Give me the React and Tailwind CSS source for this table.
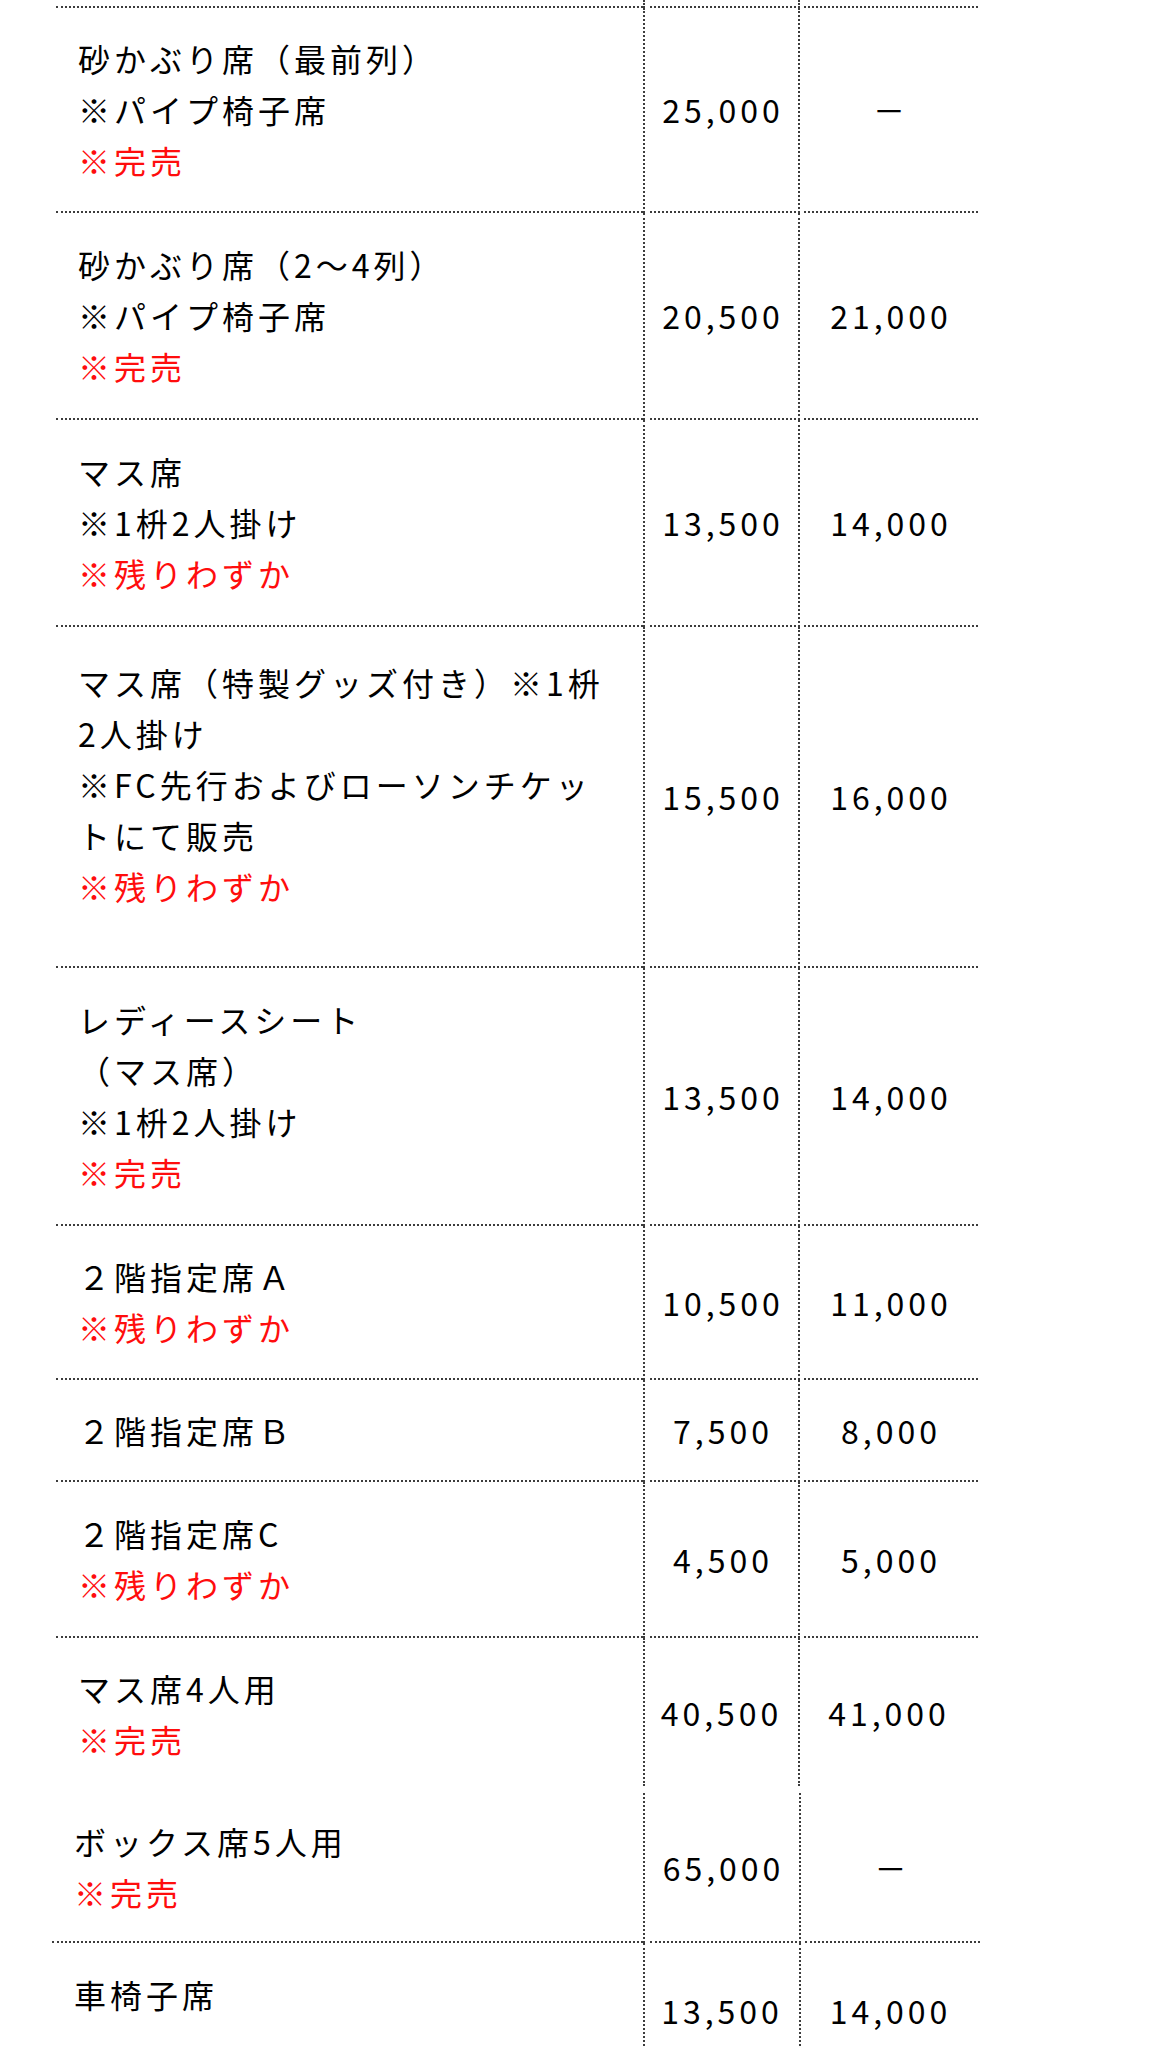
import React from "react";

const rows = [
  {
    lines: [["砂かぶり席（最前列）"], ["※パイプ椅子席"], ["※完売", true]],
    p1: "25,000",
    p2: "－",
    pad: "pt-[25px] pb-[25px]",
  },
  {
    lines: [["砂かぶり席（2〜4列）"], ["※パイプ椅子席"], ["※完売", true]],
    p1: "20,500",
    p2: "21,000",
    pad: "pt-[26px] pb-[26px]",
  },
  {
    lines: [["マス席"], ["※1枡2人掛け"], ["※残りわずか", true]],
    p1: "13,500",
    p2: "14,000",
    pad: "pt-[26px] pb-[26px]",
  },
  {
    lines: [
      ["マス席（特製グッズ付き）※1枡"],
      ["2人掛け"],
      ["※FC先行およびローソンチケッ"],
      ["トにて販売"],
      ["※残りわずか", true],
    ],
    p1: "15,500",
    p2: "16,000",
    pad: "pt-[30px] pb-[54px]",
  },
  {
    lines: [["レディースシート"], ["（マス席）"], ["※1枡2人掛け"], ["※完売", true]],
    p1: "13,500",
    p2: "14,000",
    pad: "pt-[26px] pb-[26px]",
  },
  {
    lines: [["２階指定席Ａ"], ["※残りわずか", true]],
    p1: "10,500",
    p2: "11,000",
    pad: "pt-[25px] pb-[25px]",
  },
  {
    lines: [["２階指定席Ｂ"]],
    p1: "7,500",
    p2: "8,000",
    pad: "pt-[25px] pb-[24px]",
  },
  {
    lines: [["２階指定席C"], ["※残りわずか", true]],
    p1: "4,500",
    p2: "5,000",
    pad: "pt-[26px] pb-[26px]",
  },
];

const dot = "border-dotted border-[#3c3c3c]";

function NameLines({ lines }) {
  return lines.map(([t, red], i) => (
    <div key={i} className={red ? "text-[#ff0d0d]" : "text-[#000000]"}>
      {t}
    </div>
  ));
}

function Row({ r }) {
  return (
    <div className="flex">
      <div className={`w-[587px] shrink-0 border-b-2 ${dot} pl-[22px] whitespace-nowrap ${r.pad}`}>
        <NameLines lines={r.lines} />
      </div>
      <div className={`w-[155px] shrink-0 border-l-2 ${dot} flex flex-col`}>
        <div className={`flex-1 ml-[5px] mr-[2px] border-b-2 ${dot} flex items-center justify-center text-[#000000]`}>
          {r.p1}
        </div>
      </div>
      <div className={`w-[180px] shrink-0 border-l-2 ${dot} flex flex-col`}>
        <div className={`flex-1 ml-[4px] border-b-2 ${dot} flex items-center justify-center text-[#000000]`}>
          {r.p2}
        </div>
      </div>
    </div>
  );
}

export default function App() {
  return (
    <div className="w-[1152px] h-[2048px] overflow-hidden bg-white font-['Noto_Sans_CJK_JP','Noto_Sans',sans-serif] font-normal text-[32px] leading-[51px] tracking-[4px]">
      <div className="pl-[56px]">
        {/* stub of previous row */}
        <div className="flex">
          <div className={`w-[587px] shrink-0 h-[8px] border-b-2 ${dot}`} />
          <div className={`w-[155px] shrink-0 h-[8px] border-l-2 ${dot} flex flex-col`}>
            <div className={`flex-1 ml-[5px] mr-[2px] border-b-2 ${dot}`} />
          </div>
          <div className={`w-[180px] shrink-0 h-[8px] border-l-2 ${dot} flex flex-col`}>
            <div className={`flex-1 ml-[4px] border-b-2 ${dot}`} />
          </div>
        </div>

        {rows.map((r, i) => (
          <Row key={i} r={r} />
        ))}

        {/* マス席4人用: no bottom rule */}
        <div className="flex">
          <div className="w-[587px] shrink-0 pl-[22px] pt-[25px] pb-[21px] whitespace-nowrap">
            <div className="text-[#000000]">マス席4人用</div>
            <div className="text-[#ff0d0d]">※完売</div>
          </div>
          <div className={`w-[155px] shrink-0 border-l-2 ${dot} flex items-center justify-center text-[#000000]`}>
            40,500
          </div>
          <div className={`w-[180px] shrink-0 border-l-2 ${dot} flex items-center justify-center text-[#000000]`}>
            41,000
          </div>
        </div>

        <div className="h-[7px]" />

        {/* lower block, shifted slightly left */}
        <div className="-ml-[4px]">
          <div className="flex">
            <div className={`w-[591px] shrink-0 border-b-2 ${dot} pl-[22px] pt-[23px] pb-[23px] whitespace-nowrap`}>
              <div className="text-[#000000]">ボックス席5人用</div>
              <div className="text-[#ff0d0d]">※完売</div>
            </div>
            <div className={`w-[156px] shrink-0 border-l-2 ${dot} flex flex-col`}>
              <div className={`flex-1 ml-[5px] mr-[2px] border-b-2 ${dot} flex items-center justify-center text-[#000000]`}>
                65,000
              </div>
            </div>
            <div className={`w-[181px] shrink-0 border-l-2 ${dot} flex flex-col`}>
              <div className={`flex-1 ml-[4px] border-b-2 ${dot} flex items-center justify-center text-[#000000]`}>
                －
              </div>
            </div>
          </div>
          <div className="flex">
            <div className="w-[591px] shrink-0 pl-[22px] pt-[26px] pb-[58px] whitespace-nowrap text-[#000000]">
              車椅子席
            </div>
            <div className={`w-[156px] shrink-0 border-l-2 ${dot} flex items-center justify-center text-[#000000]`}>
              13,500
            </div>
            <div className={`w-[181px] shrink-0 border-l-2 ${dot} flex items-center justify-center text-[#000000]`}>
              14,000
            </div>
          </div>
        </div>
      </div>
    </div>
  );
}
